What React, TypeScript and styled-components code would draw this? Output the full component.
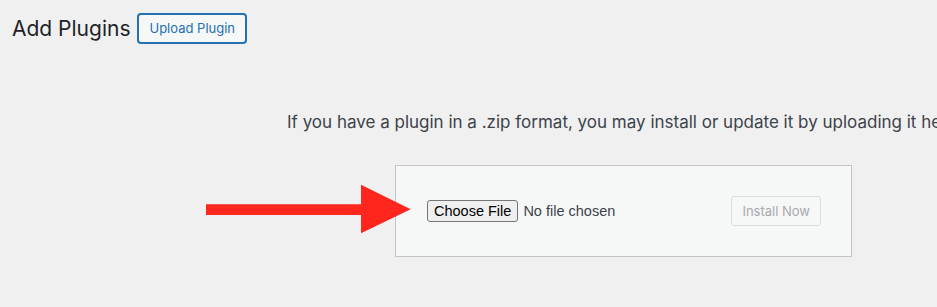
import React from "react";
import styled, { createGlobalStyle } from "styled-components";

const GlobalStyle = createGlobalStyle`
  html, body {
    margin: 0;
    padding: 0;
    background: #f0f0f1;
    overflow: hidden;
  }
  body {
    font-family: Inter, "Noto Sans", "Liberation Sans", sans-serif;
    color: #3c434a;
  }
`;

const Wrap = styled.div`
  position: relative;
  width: 937px;
  height: 307px;
  padding: 13px 0 0 12px;
  box-sizing: border-box;
`;

const Header = styled.div`
  display: flex;
  align-items: center;
  gap: 7px;
`;

const Title = styled.h1`
  margin: 0;
  font-size: 21px;
  font-weight: 400;
  line-height: 31px;
  color: #1d2327;
`;

const TitleAction = styled.button`
  box-sizing: border-box;
  height: 31px;
  padding: 0 10px;
  border: 2px solid #2271b1;
  border-radius: 4px;
  background: #f6f7f7;
  color: #2271b1;
  font-family: inherit;
  font-size: 13px;
  line-height: 27px;
  cursor: pointer;
`;

const Help = styled.p`
  margin: 68px 0 0 275px;
  font-size: 17px;
  line-height: 20px;
  white-space: nowrap;
  color: #3c434a;
`;

const UploadForm = styled.form`
  box-sizing: border-box;
  width: 457px;
  margin: 33px 0 0 383px;
  padding: 30px;
  display: flex;
  justify-content: space-between;
  align-items: center;
  background: #f6f7f7;
  border: 1px solid #c3c4c7;
`;

const FileInput = styled.input`
  margin: 0 0 0 1px;
  font-family: "Liberation Sans", Arial, sans-serif;
  font-size: 14.5px;
  color: #3c434a;

  &::file-selector-button {
    box-sizing: border-box;
    height: 22px;
    margin-right: 5px;
    padding: 0 6px;
    background: #efefef;
    border: 1px solid #767676;
    border-radius: 3px;
    color: #000;
    font-family: "Liberation Sans", Arial, sans-serif;
    font-size: 14.5px;
  }
`;

const InstallButton = styled.button`
  box-sizing: border-box;
  height: 30px;
  padding: 0 10px;
  background: #f6f7f7;
  border: 1px solid #dcdcde;
  border-radius: 3px;
  color: #a7aaad;
  font-family: inherit;
  font-size: 13px;
  line-height: 28px;
`;

const Arrow = styled.svg`
  position: absolute;
  left: 206px;
  top: 184px;
  width: 205px;
  height: 50px;
  pointer-events: none;
`;

export default function App() {
  return (
    <>
      <GlobalStyle />
      <Wrap>
        <Header>
          <Title>Add Plugins</Title>
          <TitleAction type="button">Upload Plugin</TitleAction>
        </Header>
        <Help>
          If you have a plugin in a .zip format, you may install or update it by uploading it here.
        </Help>
        <UploadForm onSubmit={(e) => e.preventDefault()}>
          <FileInput type="file" accept=".zip" />
          <InstallButton type="submit" disabled>
            Install Now
          </InstallButton>
        </UploadForm>
        <Arrow viewBox="0 0 205 50" aria-hidden="true">
          <path d="M0 20.3 H155 V0.7 L204.7 25.3 L155 49.3 V31 H0 Z" fill="#ff261d" />
        </Arrow>
      </Wrap>
    </>
  );
}
